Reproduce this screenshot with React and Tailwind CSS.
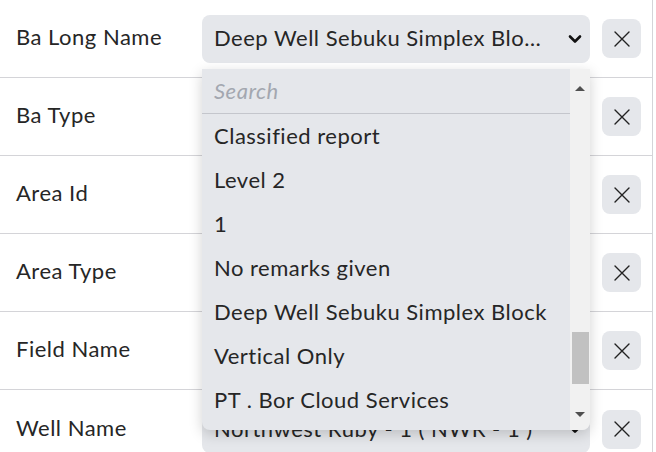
import React from 'react';

const rows = [
  { label: 'Ba Long Name', value: 'Deep Well Sebuku Simplex Block' },
  { label: 'Ba Type', value: '' },
  { label: 'Area Id', value: '' },
  { label: 'Area Type', value: '' },
  { label: 'Field Name', value: '' },
  { label: 'Well Name', value: 'Northwest Ruby - 1 ( NWR - 1 )' },
];

const options = [
  'Classified report',
  'Level 2',
  '1',
  'No remarks given',
  'Deep Well Sebuku Simplex Block',
  'Vertical Only',
  'PT . Bor Cloud Services',
];

const Chevron = () => (
  <svg width="14" height="10" viewBox="0 0 14 10" fill="none">
    <path d="M2 2.5 L7 7.5 L12 2.5" stroke="#111" strokeWidth="2.6" strokeLinecap="round" strokeLinejoin="round" />
  </svg>
);

const Cross = () => (
  <svg width="16" height="16" viewBox="0 0 16 16" fill="none">
    <path d="M1 1 L15 15 M15 1 L1 15" stroke="#222" strokeWidth="1.4" strokeLinecap="round" />
  </svg>
);

const Row = ({ label, value }) => (
  <div className="flex items-center h-[78px] border-b border-[#d4d4d8] last:border-b-0">
    <div className="w-[202px] pl-4 pb-[3px] text-[22px] tracking-[0.5px] text-[#262626] leading-none">{label}</div>
    <div className="w-[388px] h-[48px] rounded-lg bg-[#e5e7eb] flex items-center pl-3 pr-2 gap-[22px]">
      <span className="flex-1 min-w-0 pb-[2px] truncate text-[22px] tracking-[0.5px] text-[#262626]">{value}</span>
      <Chevron />
    </div>
    <button className="ml-3 w-[39px] h-[39px] rounded-lg bg-[#e5e7eb] flex items-center justify-center">
      <Cross />
    </button>
  </div>
);

export default function App() {
  return (
    <div className="relative w-[656px] h-[452px] overflow-hidden bg-white" style={{ fontFamily: '"Lato", "Open Sans", sans-serif' }}>
      <div className="w-[653px] border-r border-[#d4d4d8]">
        {rows.map((r) => (
          <Row key={r.label} {...r} />
        ))}
      </div>

      <div className="absolute left-[202px] top-[69px] w-[388px] h-[361px] bg-[#e5e7eb] rounded-b-lg shadow-[0_4px_14px_rgba(0,0,0,0.18)] flex overflow-hidden">
        <div className="flex-1 flex flex-col">
          <div className="h-[45px] shrink-0 border-b border-[#c4c6cc] flex items-center pl-3 pb-[2px]">
            <span className="italic text-[22px] tracking-[0.5px] text-[#a3a7b0]">Search</span>
          </div>
          {options.map((o) => (
            <div key={o} className="h-[44px] shrink-0 flex items-center pl-3 pb-[2px] text-[22px] tracking-[0.5px] text-[#262626]">
              {o}
            </div>
          ))}
        </div>
        <div className="w-[20px] shrink-0 bg-[#f1f1f1] flex flex-col items-center">
          <div className="h-[22px] flex items-end justify-center">
            <div className="w-0 h-0 border-l-[5px] border-r-[5px] border-b-[5px] border-l-transparent border-r-transparent border-b-[#505050]" />
          </div>
          <div className="mt-[241px] w-[17px] h-[52px] bg-[#c1c1c1]" />
          <div className="mt-[28px] w-0 h-0 border-l-[5px] border-r-[5px] border-t-[5px] border-l-transparent border-r-transparent border-t-[#505050]" />
        </div>
      </div>
    </div>
  );
}
